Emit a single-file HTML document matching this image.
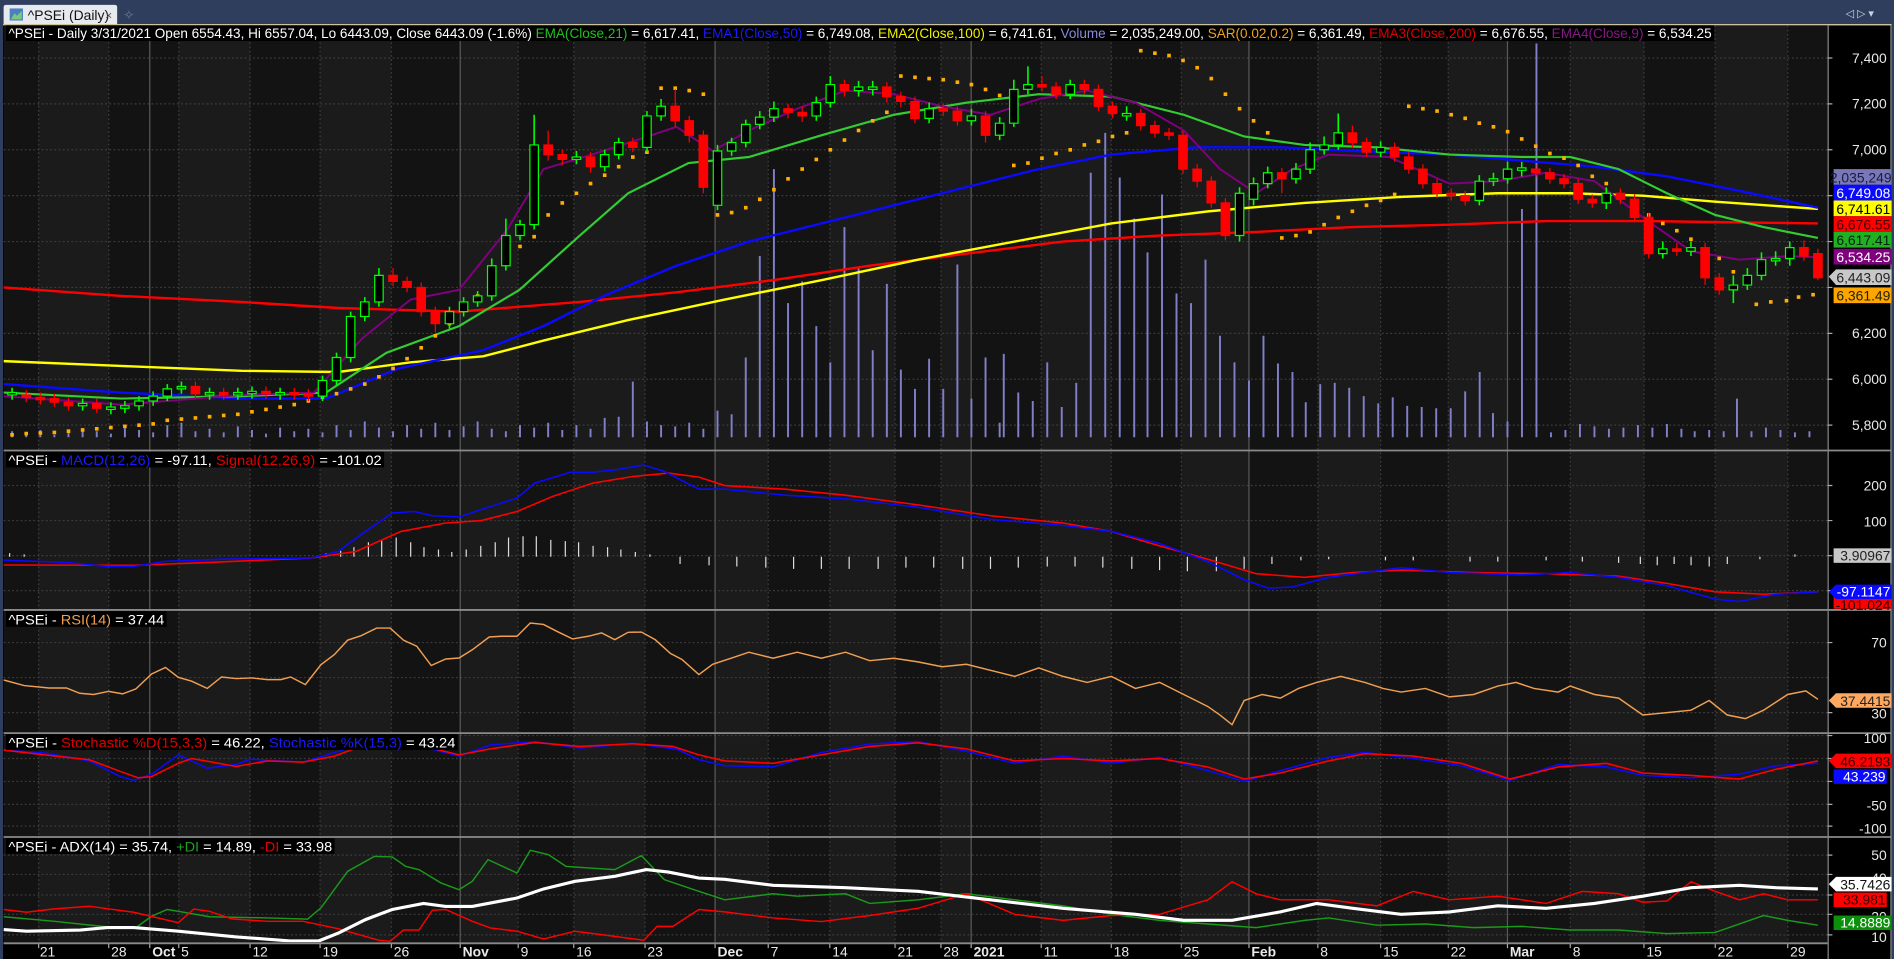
<!DOCTYPE html>
<html><head><meta charset="utf-8"><style>
html,body{margin:0;padding:0;background:#2d3c5a;overflow:hidden}
svg{display:block;font-family:"Liberation Sans",sans-serif}
</style></head><body>
<svg xmlns="http://www.w3.org/2000/svg" viewBox="0 0 1568 794" width="1894" height="959" preserveAspectRatio="none">
<defs>
<clipPath id="c1"><rect x="3" y="21" width="1510" height="351"/></clipPath>
<clipPath id="c2"><rect x="3" y="374" width="1510" height="130"/></clipPath>
<clipPath id="c3"><rect x="3" y="506" width="1510" height="100"/></clipPath>
<clipPath id="c4"><rect x="3" y="608" width="1510" height="84"/></clipPath>
<clipPath id="c5"><rect x="3" y="694" width="1510" height="86"/></clipPath>
</defs>
<rect width="1568" height="794" fill="#2f3e5d"/>
<path d="M3,20 L3,6 Q3,4 5,4 L95,4 Q97,4 97,6 L97,20 Z" fill="#e6e9ee"/>
<rect x="8" y="7" width="11" height="10" fill="#4a7fc0"/><path d="M9,16 L12,11 L14,13 L18,9 L18,16Z" fill="#7ec87e"/>
<text x="23" y="16.5" font-size="11.5" fill="#111">^PSEi (Daily)</text>
<text x="87" y="16" font-size="10" fill="#555">×</text>
<text x="102" y="16" font-size="11" fill="#6a7890">✧</text>
<text x="1528" y="14" font-size="9" fill="#c8d0e0">◁ ▷ ▾</text>
<rect x="2.5" y="20" width="1563.5" height="774" fill="#000"/>
<line x1="2.5" y1="20.5" x2="1566" y2="20.5" stroke="#e9dcb0"/>
<!-- stripes -->
<g>
<rect x="3" y="21" width="29" height="760" fill="#131313"/><rect x="32" y="21" width="58" height="760" fill="#1b1b1b"/>
<rect x="90" y="21" width="58" height="760" fill="#131313"/><rect x="148" y="21" width="59" height="760" fill="#1b1b1b"/>
<rect x="207" y="21" width="58" height="760" fill="#131313"/><rect x="265" y="21" width="59" height="760" fill="#1b1b1b"/>
<rect x="324" y="21" width="57" height="760" fill="#131313"/><rect x="381" y="21" width="48" height="760" fill="#1b1b1b"/>
<rect x="429" y="21" width="46" height="760" fill="#131313"/><rect x="475" y="21" width="59" height="760" fill="#1b1b1b"/>
<rect x="534" y="21" width="58" height="760" fill="#131313"/><rect x="592" y="21" width="44" height="760" fill="#1b1b1b"/>
<rect x="636" y="21" width="51" height="760" fill="#131313"/><rect x="687" y="21" width="54" height="760" fill="#1b1b1b"/>
<rect x="741" y="21" width="38" height="760" fill="#131313"/><rect x="779" y="21" width="25" height="760" fill="#1b1b1b"/>
<rect x="804" y="21" width="58" height="760" fill="#131313"/><rect x="862" y="21" width="58" height="760" fill="#1b1b1b"/>
<rect x="920" y="21" width="58" height="760" fill="#131313"/><rect x="978" y="21" width="56" height="760" fill="#1b1b1b"/>
<rect x="1034" y="21" width="57" height="760" fill="#131313"/><rect x="1091" y="21" width="52" height="760" fill="#1b1b1b"/>
<rect x="1143" y="21" width="56" height="760" fill="#131313"/><rect x="1199" y="21" width="49" height="760" fill="#1b1b1b"/>
<rect x="1248" y="21" width="52" height="760" fill="#131313"/><rect x="1300" y="21" width="61" height="760" fill="#1b1b1b"/>
<rect x="1361" y="21" width="59" height="760" fill="#131313"/><rect x="1420" y="21" width="60" height="760" fill="#1b1b1b"/>
<rect x="1480" y="21" width="33" height="760" fill="#131313"/>
</g>
<g stroke="#3c3c3c" stroke-dasharray="1.5,2">
<path d="M32,21V781M90,21V781M148,21V781M207,21V781M265,21V781M324,21V781M429,21V781M475,21V781M534,21V781M636,21V781M687,21V781M741,21V781M779,21V781M862,21V781M920,21V781M978,21V781M1091,21V781M1143,21V781M1199,21V781M1300,21V781M1361,21V781M1420,21V781M1480,21V781"/>
<path d="M3,48H1513M3,86H1513M3,124H1513M3,162H1513M3,200H1513M3,238H1513M3,276H1513M3,314H1513M3,352H1513M3,402H1513M3,431H1513M3,460H1513M3,489H1513M3,532H1513M3,561H1513M3,590H1513M3,609H1513M3,628H1513M3,647H1513M3,666H1513M3,684H1513M3,708H1513M3,724H1513M3,741H1513M3,757H1513M3,774H1513"/>
</g>
<path d="M124,21V781M381,21V781M592,21V781M804,21V781M1034,21V781M1248,21V781" stroke="#5a5a5a"/>
<path d="M32,781v4M90,781v4M124,781v4M148,781v4M207,781v4M265,781v4M324,781v4M381,781v4M429,781v4M475,781v4M534,781v4M592,781v4M636,781v4M687,781v4M741,781v4M779,781v4M804,781v4M862,781v4M920,781v4M978,781v4M1034,781v4M1091,781v4M1143,781v4M1199,781v4M1248,781v4M1300,781v4M1361,781v4M1420,781v4M1480,781v4" stroke="#aaa"/>

<!-- PRICE PANE -->
<g clip-path="url(#c1)">
<!-- volume -->
<path stroke="#8080c8" stroke-width="1.6" fill="none" d="M10,362V357M21.7,362V359M33.4,362V356M45,362V360M56.7,362V358M68.4,362V355M80.1,362V357M91.8,362V359M103.4,362V354M115.1,362V356M126.8,362V358M138.5,362V352M150.2,362V350M161.8,362V357M173.5,362V355M185.2,362V358M196.9,362V353M208.6,362V356M220.2,362V359M231.9,362V354M243.6,362V357M255.3,362V355M267,362V358M278.6,362V352M290.3,362V356M302,362V349M313.7,362V354M325.4,362V357M337,362V352M348.7,362V355M360.4,362V350M372.1,362V356M383.8,362V353M395.4,362V349M407.1,362V355M418.8,362V357M430.5,362V352M442.2,362V354M453.8,362V350M465.5,362V356M477.2,362V352M488.9,362V355M500.6,362V346M512.2,362V345M523.9,362V316M535.6,362V349M547.3,362V352M559,362V353M570.6,362V350M582.3,362V355M594,362V340M605.7,362V343M617.4,362V296M629,362V212M640.7,362V140M652.4,362V251M664.1,362V233M675.8,362V270M687.4,362V300M699.1,362V188M710.8,362V222M722.5,362V290M734.2,362V235M745.8,362V306M757.5,362V322M769.2,362V297M780.9,362V322M792.6,362V219M804.2,362V330M815.9,362V296M827.6,362V350M831,362V293M843,362V325M855,362V332M867,362V300M879,362V337M891,362V317M903,362V143M915,362V110M927,362V147M939,362V181M950,362V209M962,362V161M974,362V243M986,362V251M998,362V215M1010,362V278M1022,362V300M1034,362V315M1046,362V278M1058,362V301M1070,362V308M1081,362V333M1093,362V318M1105,362V317M1117,362V321M1129,362V328M1141,362V334M1153,362V329M1165,362V336M1177,362V337M1189,362V338M1201,362V338M1213,362V324M1225,362V308M1236,362V342M1248,362V349M1260,362V173M1272,362V36M1284,362V358M1296,362V356M1308,362V351M1320,362V353M1332,362V355M1344,362V354M1356,362V352M1368,362V354M1380,362V351M1392,362V355M1403,362V357M1415,362V356M1427,362V357M1438,362V330M1450,362V357M1462,362V354M1474,362V356M1486,362V358M1498,362V357"/>
<!-- EMAs -->
<polyline fill="none" stroke="#ff0000" stroke-width="2" points="3,238 100,245 200,250 280,255 380,258 480,250 560,242 640,232 720,220 800,210 880,200 960,195 1040,192 1120,188 1200,186 1280,183 1360,183 1505,185"/>
<polyline fill="none" stroke="#ffff00" stroke-width="2" points="3,299 100,303 200,307 280,308 340,300 400,295 450,282 520,265 600,248 680,232 760,215 840,200 920,185 1000,175 1080,168 1160,163 1240,160 1300,160 1360,162 1420,167 1505,173"/>
<polyline fill="none" stroke="#0a0aff" stroke-width="2" points="3,318 100,325 200,330 270,330 330,305 400,290 450,270 500,245 560,220 620,200 700,180 780,160 860,140 920,128 990,122 1060,122 1120,125 1200,128 1260,133 1320,138 1380,146 1440,158 1505,172"/>
<polyline fill="none" stroke="#33cc33" stroke-width="1.8" points="3,325 100,330 200,328 270,325 320,292 380,270 430,240 480,195 520,160 570,135 620,130 680,112 740,95 800,85 860,78 920,80 980,95 1030,113 1080,120 1140,122 1200,128 1260,130 1300,130 1340,140 1380,160 1420,178 1460,188 1505,197"/>
<polyline fill="none" stroke="#800080" stroke-width="1.6" points="3,328 100,335 200,327 260,325 300,280 340,248 380,240 420,190 450,140 490,128 530,115 560,105 590,125 620,108 660,90 700,75 740,78 780,88 820,95 860,82 900,75 940,85 980,108 1010,140 1040,160 1070,140 1100,128 1150,130 1200,152 1240,150 1280,143 1320,150 1360,180 1400,208 1440,215 1480,212 1505,213"/>
<!-- SAR -->
<g fill="#ffae00">
<path d="M8.5,358.5h3v3h-3zM20.2,357.5h3v3h-3zM31.9,357h3v3h-3zM43.5,356.5h3v3h-3zM55.2,355.5h3v3h-3zM66.9,354.5h3v3h-3zM78.6,353.5h3v3h-3zM90.3,352.5h3v3h-3zM101.9,351.5h3v3h-3zM113.6,350.5h3v3h-3zM125.3,349.5h3v3h-3zM137,346.5h3v3h-3zM148.7,345.5h3v3h-3zM160.3,344.5h3v3h-3zM172,343.5h3v3h-3zM183.7,342.5h3v3h-3zM195.4,341.5h3v3h-3zM207.1,339.5h3v3h-3zM218.7,337.5h3v3h-3zM230.4,335.5h3v3h-3zM242.1,333.5h3v3h-3zM253.8,330.5h3v3h-3zM265.5,327.5h3v3h-3zM277.1,324.5h3v3h-3zM288.8,320.5h3v3h-3zM300.5,316.5h3v3h-3zM312.2,310.5h3v3h-3zM323.9,303.5h3v3h-3zM335.5,295.5h3v3h-3zM347.2,286.5h3v3h-3zM358.9,276.5h3v3h-3zM370.6,266.5h3v3h-3zM382.3,255.5h3v3h-3zM393.9,243.5h3v3h-3zM405.6,230.5h3v3h-3zM417.3,216.5h3v3h-3zM429,202.5h3v3h-3zM440.7,194.5h3v3h-3z"/>
<path d="M452.3,176.5h3v3h-3zM464,166.5h3v3h-3zM475.7,158.5h3v3h-3zM487.4,150.5h3v3h-3zM499.1,143.5h3v3h-3zM510.7,136.5h3v3h-3zM522.4,128.5h3v3h-3zM534.1,124.5h3v3h-3zM545.8,71.5h3v3h-3zM557.5,71.5h3v3h-3zM569.1,73.5h3v3h-3zM580.8,76.5h3v3h-3zM592.5,176.5h3v3h-3zM604.2,174.5h3v3h-3zM615.9,170.5h3v3h-3zM627.5,163.5h3v3h-3zM639.2,155.5h3v3h-3zM650.9,146.5h3v3h-3zM662.6,138.5h3v3h-3zM674.3,130.5h3v3h-3zM685.9,122.5h3v3h-3zM697.6,114.5h3v3h-3zM709.3,106.5h3v3h-3zM721,98.5h3v3h-3zM732.7,91.5h3v3h-3zM744.3,61.5h3v3h-3zM756,62.5h3v3h-3zM767.7,63.5h3v3h-3zM779.4,64.5h3v3h-3zM791.1,66.5h3v3h-3zM802.7,68.5h3v3h-3zM814.4,72.5h3v3h-3zM826.1,77.5h3v3h-3z"/>
<path d="M837.8,135.5h3v3h-3zM849.5,133.5h3v3h-3zM861.1,129.5h3v3h-3zM872.8,125.5h3v3h-3zM884.5,122.5h3v3h-3zM896.2,118.5h3v3h-3zM907.9,115.5h3v3h-3zM919.5,111.5h3v3h-3zM931.2,108.5h3v3h-3zM942.9,40.5h3v3h-3zM954.6,42.5h3v3h-3zM966.3,44.5h3v3h-3zM977.9,48.5h3v3h-3zM989.6,54.5h3v3h-3zM1001.3,63.5h3v3h-3zM1013,76.5h3v3h-3zM1024.7,88.5h3v3h-3zM1036.3,98.5h3v3h-3zM1048,108.5h3v3h-3zM1059.7,195.5h3v3h-3zM1071.4,193.5h3v3h-3zM1083.1,190.5h3v3h-3zM1094.7,184.5h3v3h-3zM1106.4,178.5h3v3h-3zM1118.1,173.5h3v3h-3zM1129.8,168.5h3v3h-3zM1141.5,164.5h3v3h-3zM1153.1,159.5h3v3h-3z"/>
<path d="M1164.8,86.5h3v3h-3zM1176.5,88.5h3v3h-3zM1188.2,90.5h3v3h-3zM1199.9,93.5h3v3h-3zM1211.5,96.5h3v3h-3zM1223.2,100.5h3v3h-3zM1234.9,103.5h3v3h-3zM1246.6,107.5h3v3h-3zM1258.3,113.5h3v3h-3zM1269.9,119.5h3v3h-3zM1281.6,125.5h3v3h-3zM1293.3,129.5h3v3h-3zM1305,135.5h3v3h-3zM1316.7,144.5h3v3h-3zM1328.3,150.5h3v3h-3zM1340,160.5h3v3h-3zM1351.7,168.5h3v3h-3zM1363.4,176.5h3v3h-3zM1375.1,183.5h3v3h-3zM1386.7,189.5h3v3h-3zM1398.4,196.5h3v3h-3zM1410.1,205.5h3v3h-3zM1421.8,212.5h3v3h-3zM1433.5,223.5h3v3h-3zM1452.5,250.5h3v3h-3zM1464.5,248.5h3v3h-3zM1477.5,247.5h3v3h-3zM1487.5,244.5h3v3h-3zM1499.5,242.5h3v3h-3z"/>
</g>
<!-- green candles -->
<path fill="none" stroke="#00ff00" stroke-width="1.3" d="M10,321V331M68.4,330V340M91.8,333V343M103.4,332V342M115.1,328V340M126.8,324V336M138.5,318V332M150.2,316V326M173.5,321V331M196.9,321V331M208.6,320V330M231.9,321V331M267,311V332M278.6,292V319M290.3,258V300M302,246V266M313.7,222V254M372.1,254V272M383.8,246V262M395.4,241V254M407.1,214V249M418.8,181V224M430.5,182V199M442.2,95V190M477.2,125V136M500.6,124V142M512.2,114V132M535.6,92V126M547.3,82V100M594,120V174M605.7,114V129M617.4,99V122M629,92V107M640.7,84V101M675.8,80V100M687.4,63V89M710.8,67V80M722.5,67V79M769.2,85V102M804.2,90V104M827.6,97V116M839.3,66V105M851,55V78M886,66V82M932.7,88V100M1026.2,155V200M1037.8,147V170M1049.5,138V156M1072.9,135V152M1084.6,118V144M1096.2,113V128M1107.9,94V124M1143,117V130M1224.7,145V170M1236.4,143V154M1248.1,134V152M1259.8,134V146M1329.8,155V173M1376.6,200V214M1399.9,200V212M1435,228V251M1446.6,222V240M1458.3,209V232M1470,208V220M1481.7,200V220"/>
<path fill="#000" stroke="#00ff00" stroke-width="1" d="M6.5,325h7v2h-7zM64.9,334h7v2h-7zM88.3,337h7v2h-7zM99.9,336h7v2h-7zM111.6,332h7v4h-7zM123.3,328h7v4h-7zM135,322h7v6h-7zM146.7,320h7v2h-7zM170,325h7v2h-7zM193.4,325h7v2h-7zM205.1,324h7v2h-7zM228.4,325h7v2h-7zM263.5,315h7v13h-7zM275.1,296h7v19h-7zM286.8,262h7v34h-7zM298.5,250h7v12h-7zM310.2,228h7v22h-7zM368.6,258h7v10h-7zM380.3,250h7v8h-7zM391.9,245h7v5h-7zM403.6,220h7v25h-7zM415.3,195h7v25h-7zM427,186h7v9h-7zM438.7,120h7v66h-7zM473.7,130h7v2h-7zM497.1,128h7v10h-7zM508.7,118h7v10h-7zM532.1,96h7v26h-7zM543.8,88h7v8h-7zM590.5,125h7v45h-7zM602.2,118h7v7h-7zM613.9,103h7v15h-7zM625.5,97h7v6h-7zM637.2,90h7v7h-7zM672.3,85h7v11h-7zM683.9,70h7v15h-7zM707.3,72h7v3h-7zM719,72h7v2h-7zM765.7,90h7v8h-7zM800.7,96h7v4h-7zM824.1,102h7v10h-7zM835.8,74h7v28h-7zM847.5,70h7v4h-7zM882.5,70h7v8h-7zM929.2,94h7v2h-7zM1022.7,160h7v35h-7zM1034.3,152h7v13h-7zM1046,143h7v9h-7zM1069.4,140h7v8h-7zM1081.1,124h7v16h-7zM1092.7,120h7v4h-7zM1104.4,110h7v10h-7zM1139.5,122h7v4h-7zM1221.2,150h7v16h-7zM1232.9,148h7v2h-7zM1244.6,140h7v8h-7zM1256.3,139h7v2h-7zM1326.3,160h7v8h-7zM1373.1,206h7v4h-7zM1396.4,205h7v3h-7zM1431.5,236h7v4h-7zM1443.1,228h7v8h-7zM1454.8,215h7v13h-7zM1466.5,214h7v2h-7zM1478.2,205h7v9h-7z"/>
<!-- red candles -->
<path fill="#ff0000" stroke="#ff0000" stroke-width="1" d="M18.2,327h7v2h-7zM21.7,323V333M29.9,329h7v2h-7zM33.4,325V335M41.5,330h7v3h-7zM45,326V337M53.2,333h7v3h-7zM56.7,329V340M76.6,334h7v4h-7zM80.1,330V342M158.3,320h7v6h-7zM161.8,316V330M181.7,325h7v2h-7zM185.2,321V331M216.7,324h7v2h-7zM220.2,320V330M240.1,325h7v2h-7zM243.6,321V331M251.8,326h7v2h-7zM255.3,322V332M321.9,228h7v5h-7zM325.4,222V237M333.5,233h7v5h-7zM337,229V242M345.2,238h7v20h-7zM348.7,234V262M356.9,258h7v10h-7zM360.4,254V275M450.3,120h7v8h-7zM453.8,108V133M462,128h7v4h-7zM465.5,124V137M485.4,130h7v8h-7zM488.9,126V143M520.4,118h7v4h-7zM523.9,114V126M555.5,88h7v12h-7zM559,74V105M567.1,100h7v12h-7zM570.6,96V118M578.8,112h7v43h-7zM582.3,108V160M648.9,90h7v3h-7zM652.4,86V98M660.6,93h7v3h-7zM664.1,88V101M695.6,70h7v5h-7zM699.1,66V80M730.7,72h7v8h-7zM734.2,68V85M742.3,80h7v4h-7zM745.8,76V89M754,84h7v14h-7zM757.5,80V102M777.4,90h7v2h-7zM780.9,86V96M789.1,92h7v8h-7zM792.6,88V104M812.4,96h7v16h-7zM815.9,92V118M859.1,70h7v2h-7zM862.6,63V76M870.8,72h7v6h-7zM874.3,68V82M894.2,70h7v4h-7zM897.7,66V78M905.9,74h7v14h-7zM909.4,70V92M917.5,88h7v6h-7zM921,84V98M940.9,94h7v10h-7zM944.4,90V108M952.6,104h7v6h-7zM956.1,100V114M964.3,110h7v2h-7zM967.8,106V116M975.9,112h7v28h-7zM979.4,108V144M987.6,140h7v10h-7zM991.1,136V155M999.3,150h7v18h-7zM1002.8,146V172M1011,168h7v27h-7zM1014.5,164V199M1057.7,143h7v5h-7zM1061.2,139V160M1116.1,110h7v8h-7zM1119.6,104V122M1127.8,118h7v8h-7zM1131.3,114V130M1151.1,122h7v8h-7zM1154.6,118V134M1162.8,130h7v10h-7zM1166.3,126V144M1174.5,140h7v12h-7zM1178,136V156M1186.2,152h7v8h-7zM1189.7,148V164M1197.9,160h7v2h-7zM1201.4,156V166M1209.5,162h7v4h-7zM1213,158V170M1267.9,140h7v3h-7zM1271.4,136V147M1279.6,143h7v5h-7zM1283.1,139V152M1291.3,148h7v4h-7zM1294.8,144V156M1303,152h7v13h-7zM1306.5,148V169M1314.7,165h7v3h-7zM1318.2,161V172M1338,160h7v5h-7zM1341.5,156V169M1349.7,165h7v15h-7zM1353.2,161V184M1361.4,180h7v30h-7zM1364.9,176V214M1384.7,206h7v2h-7zM1388.2,201V212M1408.1,205h7v25h-7zM1411.6,201V236M1419.8,230h7v10h-7zM1423.3,226V244M1489.9,205h7v7h-7zM1493.4,199V216M1501.5,210h7v20h-7zM1505,206V232"/>
</g>

<!-- MACD -->
<g clip-path="url(#c2)" fill="none">
<path stroke="#dddddd" stroke-width="1" d="M8,461v-3M20,461v-2M270,461v-3M282,461v-5M293,461v-8M305,461v-12M316,461v-14M328,461v-16M340,461v-12M351,461v-8M363,461v-6M374,461v-4M386,461v-6M398,461v-9M410,461v-12M421,461v-16M433,461v-17M444,461v-17M456,461v-14M468,461v-13M479,461v-12M491,461v-9M503,461v-8M514,461v-6M526,461v-4M538,461v-2M563,461v6M587,461v7M610,461v8M634,461v9M657,461v10M680,461v10M703,461v10M727,461v10M750,461v9M773,461v9M797,461v10M820,461v10M843,461v9M867,461v8M890,461v8M913,461v9M937,461v10M960,461v11M983,461v12M1007,461v12M1030,461v10M1053,461v6M1077,461v3M1100,461v2M1147,461v3M1170,461v3M1217,461v4M1240,461v4M1280,461v3M1310,461v4M1340,461v5M1358,461v6M1372,461v7M1386,461v6M1400,461v7M1415,461v8M1430,461v6M1457,461v2M1486,461v-2"/>
<polyline stroke="#ff0000" stroke-width="1.3" points="3,467.8 110.7,468 166,466 258,462 295,456.5 332,440 369,433 398.5,431 428,423.5 457.6,411 490.8,400 524,394.5 553.5,391.7 578.6,395 600,402 650,405 700,410 760,418 820,427 880,433 920,440 960,452 1000,463 1040,475 1080,478 1120,474 1160,472 1220,474 1280,475 1340,477 1380,483 1420,490 1460,492 1505,490"/>
<polyline stroke="#0a0aff" stroke-width="1.3" points="3,463.8 55,465.6 88.6,469 110.7,469 136.5,464.8 184.5,463 258,462 280,456.5 302.6,440 324.7,424.8 343,423.5 358,427 380,428 402,420.7 428,412.4 442.8,400 472,391 490.8,391 509,389 533,385 550,390.4 578.6,405 600,405 650,410 700,413 760,420 820,430 880,435 920,440 960,450 1000,465 1030,480 1050,487 1070,486 1100,478 1160,470 1200,474 1260,476 1300,474 1340,478 1380,485 1420,496 1440,498 1470,492 1505,490"/>
</g>
<!-- RSI -->
<polyline clip-path="url(#c3)" fill="none" stroke="#f0a050" stroke-width="1.2" points="3,563 20,567.6 40.6,569.6 55,569.6 66,574 77.5,575 90,572.4 101.5,574.5 112.5,570.4 125.5,558 137,552.6 147.6,560.8 158.7,564 171.6,570 183.4,560.5 195.6,561.8 208.5,561.3 221.4,562.7 232.5,562.7 240.6,560.5 252.8,566.8 265.7,550.3 276.8,542 287.8,530 299,526.3 311.8,520 323,520 334,530 345,535 357,551 369,545.6 380,544.8 391,538 405,527.4 415,526.8 428,526.8 439,515.8 450,517 461,522.7 474,529 487,526.8 498,524 509,529.6 520,523.5 531,523.3 542.4,529.6 555,541 564.6,546 578.6,558.5 590,550 605,545 620,540 640,545 660,540 680,545 700,540 720,547 740,545 760,548 780,552 800,550 820,555 840,560 860,553 880,560 900,565 920,560 940,570 960,565 980,575 990,580 1000,585 1010,592 1020,600 1030,580 1045,575 1060,578 1075,570 1090,565 1110,560 1130,565 1145,570 1160,573 1180,570 1200,577 1220,575 1240,568 1255,565 1270,570 1290,573 1300,568 1320,575 1340,578 1360,592 1380,590 1400,588 1415,580 1430,592 1445,595 1460,588 1480,575 1495,572 1505,579"/>
<!-- Stoch -->
<g clip-path="url(#c4)" fill="none" stroke-width="1.3">
<polyline stroke="#0a0aff" points="3,621 37,623.5 74,630 99.6,643 110.7,646 125.5,641 147.6,625 171.6,636 195.6,633 206.8,628.6 251,631 280.4,622 302.6,615.7 321,614 339.5,615.8 380,626 406,616.7 442.8,614 480,619.4 524,615.4 561,620.5 578.6,629 600,634 640,635 680,623 720,616 760,614 800,622 840,632 880,626 920,632 960,627 1000,638 1030,647 1060,638 1100,627 1130,623 1170,628 1210,634 1250,646 1290,633 1330,635 1360,642 1400,644 1440,641 1470,634 1505,632"/>
<polyline stroke="#ff0000" points="3,621 37,625 74,629 99.6,638.7 114.4,644 125.5,643 147.6,632 158.7,628 173.4,630.6 195.6,634.6 221.4,630 251,631 276.8,626 302.6,616.6 321,614 339.5,615 380,625 406,620 442.8,614.7 480,618 524,615.8 557,618 578.6,625 600,630 640,632 680,625 720,618 760,615 800,620 840,630 880,628 920,630 960,628 1000,635 1030,645 1060,640 1100,630 1130,624 1170,626 1210,632 1250,645 1290,635 1330,632 1360,640 1400,642 1440,645 1470,637 1505,630"/>
</g>
<!-- ADX -->
<g clip-path="url(#c5)" fill="none">
<polyline stroke="#1a9a1a" stroke-width="1.2" points="3,759 44,762.7 88.6,767.4 112.5,768 125.5,758.6 138.4,753 147.6,754.5 173.4,759 221.4,760 254.6,761 265.7,751.7 287.8,721.4 310,709 324.7,709.5 335.8,717.3 346.9,720 365,731 380,736.6 391,729.7 404,711.7 428,722.8 439,704 454,707.6 468.6,717.3 487,718.6 509,720 531,708.4 550,728.3 578.6,738 600,745 640,740 660,742 700,740 720,748 760,745 800,740 840,745 880,750 920,757 960,762 1000,765 1040,768 1080,762 1100,760 1140,766 1180,765 1220,768 1260,767 1300,770 1340,770 1380,773 1420,772 1440,765 1460,758 1480,762 1505,766"/>
<polyline stroke="#ff0000" stroke-width="1.2" points="3,753 22,755.3 44,752.6 73.8,750.3 110.7,755.3 147.6,764 160.5,752.6 173.4,754.5 192,760.8 221.4,762.8 251,762.8 280.4,769 313.7,778.5 323,779.3 334,770 346.9,770 358,753.6 369,753 391,762.8 406,768.3 428,771 450,777.4 476,771 498,773.8 533,778.5 544,767 557,767 578.6,753 600,755 640,760 680,763 720,758 760,752 800,740 840,757 880,762 920,758 960,757 1000,745 1020,730 1040,740 1060,745 1100,745 1140,750 1170,738 1200,745 1240,742 1280,748 1310,738 1340,740 1360,747 1380,746 1400,730 1420,738 1440,745 1460,740 1480,745 1505,745"/>
<polyline stroke="#ffffff" stroke-width="2.6" points="3,769.6 22,771 66.4,770 88.6,768 110.7,768 147.6,771 195.6,775.7 240,779 264,779 280.4,772.4 302.6,761.4 324.7,753 350.6,748 369,750.5 391,750.5 428,743.5 450,736 476,729.7 509,725.5 535,720 553.5,722 578.6,727 600,728 640,733 700,735 760,738 820,745 880,752 940,757 980,762 1020,762 1060,755 1090,748 1120,752 1160,757 1200,755 1240,750 1280,752 1320,748 1360,742 1400,735 1440,733 1470,735 1505,736"/>
</g>

<!-- separators -->
<g stroke="#8a8a8a" stroke-width="1.5">
<line x1="3" y1="373" x2="1566" y2="373"/><line x1="3" y1="505" x2="1566" y2="505"/>
<line x1="3" y1="607" x2="1566" y2="607"/><line x1="3" y1="693" x2="1566" y2="693"/>
<line x1="3" y1="781" x2="1513" y2="781"/>
</g>
<line x1="1513.5" y1="21" x2="1513.5" y2="794" stroke="#8a8a8a"/>
<line x1="1565.5" y1="21" x2="1565.5" y2="794" stroke="#8a8a8a"/>
<path stroke="#aaa" d="M1513,48h4M1513,86h4M1513,124h4M1513,162h4M1513,200h4M1513,238h4M1513,276h4M1513,314h4M1513,352h4M1513,402h4M1513,431h4M1513,460h4M1513,489h4M1513,532h4M1513,590h4M1513,609h4M1513,628h4M1513,647h4M1513,666h4M1513,684h4M1513,708h4M1513,724h4M1513,741h4M1513,757h4M1513,774h4"/>

<!-- headers -->
<g font-size="11.5">
<rect x="5" y="21" width="1414" height="13" fill="#000"/>
<text x="7" y="31.5" fill="#fff" textLength="1410" lengthAdjust="spacingAndGlyphs">^PSEi - Daily 3/31/2021 Open 6554.43, Hi 6557.04, Lo 6443.09, Close 6443.09 (-1.6%) <tspan fill="#22c022">EMA(Close,21)</tspan> = 6,617.41, <tspan fill="#1a1aff">EMA1(Close,50)</tspan> = 6,749.08, <tspan fill="#f0f000">EMA2(Close,100)</tspan> = 6,741.61, <tspan fill="#8a8ad8">Volume</tspan> = 2,035,249.00, <tspan fill="#f0a020">SAR(0.02,0.2)</tspan> = 6,361.49, <tspan fill="#e00000">EMA3(Close,200)</tspan> = 6,676.55, <tspan fill="#8a168a">EMA4(Close,9)</tspan> = 6,534.25</text>
<rect x="5" y="374" width="313" height="13" fill="#000"/>
<text x="7" y="385" fill="#fff" textLength="309" lengthAdjust="spacingAndGlyphs">^PSEi - <tspan fill="#1a1aff">MACD(12,26)</tspan> = -97.11, <tspan fill="#e00000">Signal(12,26,9)</tspan> = -101.02</text>
<rect x="5" y="506" width="133" height="13" fill="#000"/>
<text x="7" y="517" fill="#fff" textLength="129" lengthAdjust="spacingAndGlyphs">^PSEi - <tspan fill="#f0a050">RSI(14)</tspan> = 37.44</text>
<rect x="5" y="608" width="374" height="13" fill="#000"/>
<text x="7" y="619" fill="#fff" textLength="370" lengthAdjust="spacingAndGlyphs">^PSEi - <tspan fill="#e00000">Stochastic %D(15,3,3)</tspan> = 46.22, <tspan fill="#1a1aff">Stochastic %K(15,3)</tspan> = 43.24</text>
<rect x="5" y="694" width="272" height="13" fill="#000"/>
<text x="7" y="705" fill="#fff" textLength="268" lengthAdjust="spacingAndGlyphs">^PSEi - ADX(14) = 35.74, <tspan fill="#1fa01f">+DI</tspan> = 14.89, <tspan fill="#e00000">-DI</tspan> = 33.98</text>
</g>
<g font-size="11.5" fill="#e8e8e8" text-anchor="end">
<text x="1562" y="52">7,400</text><text x="1562" y="90">7,200</text><text x="1562" y="128">7,000</text>
<text x="1562" y="280">6,200</text><text x="1562" y="318">6,000</text><text x="1562" y="356">5,800</text>
<text x="1562" y="406">200</text><text x="1562" y="436">100</text>
<text x="1562" y="536">70</text><text x="1562" y="595">30</text>
<text x="1562" y="615">100</text><text x="1562" y="671">-50</text><text x="1562" y="690">-100</text>
<text x="1562" y="712">50</text><text x="1562" y="731">40</text><text x="1562" y="763">20</text><text x="1562" y="780">10</text>
</g>
<g font-size="11.5" text-anchor="end">
<rect x="1518" y="140" width="48" height="13" fill="#7878b8"/><text x="1566" y="151" fill="#1a1a40">2,035,249</text>
<rect x="1518" y="153" width="48" height="13" fill="#0a0aff"/><text x="1565" y="164" fill="#fff">6,749.08</text>
<rect x="1518" y="166" width="48" height="13" fill="#ffff00"/><text x="1565" y="177" fill="#000">6,741.61</text>
<rect x="1518" y="179" width="48" height="13" fill="#ff0000"/><text x="1565" y="190" fill="#400">6,676.55</text>
<rect x="1518" y="192" width="48" height="13" fill="#22b022"/><text x="1565" y="203" fill="#021">6,617.41</text>
<rect x="1518" y="206" width="48" height="13" fill="#800080"/><text x="1565" y="217" fill="#fff">6,534.25</text>
<path d="M1514,229 L1520,223 L1566,223 L1566,236 L1520,236Z" fill="#c8c8c8"/><text x="1565" y="234" fill="#222">6,443.09</text>
<rect x="1518" y="238" width="48" height="13" fill="#ffa500"/><text x="1565" y="249" fill="#220">6,361.49</text>
<rect x="1518" y="454" width="48" height="12" fill="#c8c8c8"/><text x="1565" y="464" fill="#222">3.90967</text>
<rect x="1518" y="494" width="48" height="10" fill="#ff0000"/><text x="1565" y="505" fill="#300">-101.024</text>
<path d="M1514,490 L1520,484 L1566,484 L1566,496 L1520,496Z" fill="#0a0aff"/><text x="1565" y="494" fill="#fff">-97.1147</text>
<path d="M1514,580 L1520,574 L1566,574 L1566,586 L1520,586Z" fill="#ffa860"/><text x="1565" y="584.5" fill="#222">37.4415</text>
<path d="M1514,630 L1520,624 L1566,624 L1566,636 L1520,636Z" fill="#ff0000"/><text x="1565" y="634.5" fill="#300">46.2193</text>
<rect x="1518" y="637" width="44" height="12" fill="#0a0aff"/><text x="1561" y="647" fill="#fff">43.239</text>
<path d="M1514,732 L1520,726 L1566,726 L1566,738 L1520,738Z" fill="#fff"/><text x="1565" y="736.5" fill="#111">35.7426</text>
<rect x="1518" y="739" width="44" height="12" fill="#ff0000"/><text x="1561" y="749" fill="#300">33.981</text>
<rect x="1518" y="758" width="48" height="12" fill="#0a900a"/><text x="1565" y="768" fill="#fff">14.8889</text>
</g>
<g font-size="11.5" fill="#e8e8e8">
<text x="33" y="792">21</text><text x="92" y="792">28</text><text x="126" y="792" font-weight="bold">Oct</text><text x="150" y="792">5</text>
<text x="209" y="792">12</text><text x="267" y="792">19</text><text x="326" y="792">26</text><text x="383" y="792" font-weight="bold">Nov</text>
<text x="431" y="792">9</text><text x="477" y="792">16</text><text x="536" y="792">23</text><text x="594" y="792" font-weight="bold">Dec</text>
<text x="638" y="792">7</text><text x="689" y="792">14</text><text x="743" y="792">21</text><text x="781" y="792">28</text><text x="806" y="792" font-weight="bold">2021</text>
<text x="864" y="792">11</text><text x="922" y="792">18</text><text x="980" y="792">25</text><text x="1036" y="792" font-weight="bold">Feb</text>
<text x="1093" y="792">8</text><text x="1145" y="792">15</text><text x="1201" y="792">22</text><text x="1250" y="792" font-weight="bold">Mar</text>
<text x="1302" y="792">8</text><text x="1363" y="792">15</text><text x="1422" y="792">22</text><text x="1482" y="792">29</text>
</g>
</svg>
</body></html>
